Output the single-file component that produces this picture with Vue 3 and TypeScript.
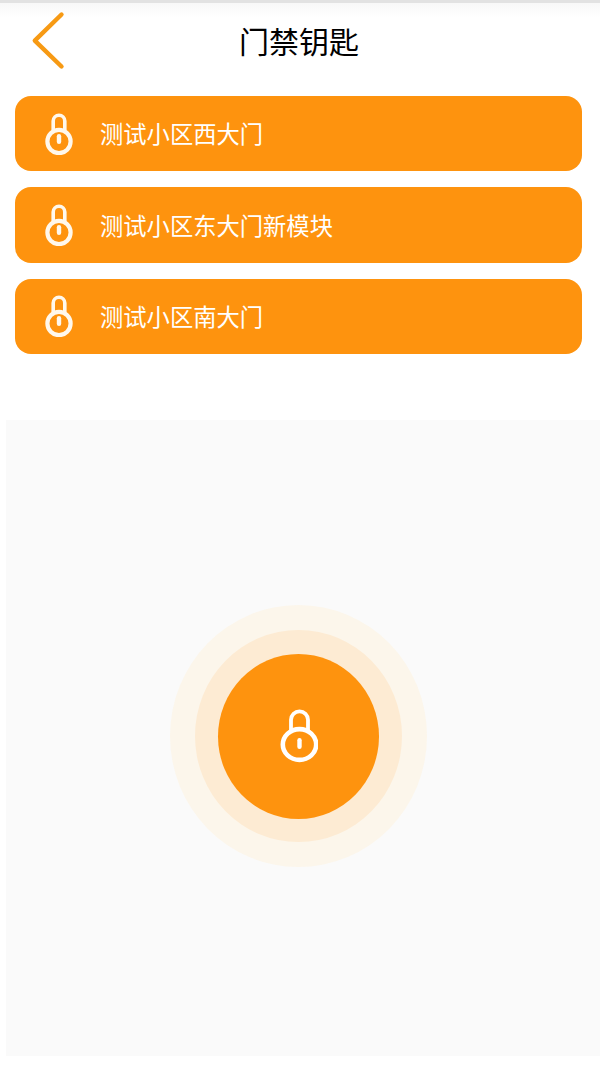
<script setup lang="ts">
const doors: string[] = ['测试小区西大门', '测试小区东大门新模块', '测试小区南大门']
</script>

<template>
  <div class="page">
    <div class="top-line"></div>
    <header class="header">
      <svg class="back" width="34" height="64" viewBox="0 0 34 64" fill="none">
        <path d="M30.5 6.5 L3.8 32.6 L30.5 58.5" stroke="#f79a14" stroke-width="4.4" stroke-linecap="round" stroke-linejoin="round" />
      </svg>
      <h1 class="title">门禁钥匙</h1>
    </header>
    <section class="list">
      <div v-for="door in doors" :key="door" class="item">
        <svg class="lock" width="30" height="42" viewBox="0 0 30 42" fill="none">
          <path d="M9.2 17 V8 a5.8 5.8 0 0 1 11.6 0 V17" stroke="#fff8ec" stroke-width="3.6" />
          <circle cx="15" cy="28.5" r="11.6" stroke="#fff8ec" stroke-width="4.2" />
          <rect x="12.8" y="21" width="4.4" height="10" rx="2.2" fill="#fff8ec" />
        </svg>
        <span class="label">{{ door }}</span>
      </div>
    </section>
    <main class="panel">
      <div class="ring-outer">
        <div class="ring-mid">
          <div class="core">
            <svg class="core-lock" width="38" height="54" viewBox="0 0 38 54" fill="none">
              <path d="M11 21 V10.8 a8.5 8.5 0 0 1 17 0 V21" stroke="#fff" stroke-width="3.8" />
              <ellipse cx="19.5" cy="35.5" rx="16.7" ry="15.4" stroke="#fff" stroke-width="4.6" />
              <rect x="17.3" y="29" width="4.4" height="11" rx="2.2" fill="#fff" />
            </svg>
          </div>
        </div>
      </div>
    </main>
    <div class="foot"></div>
  </div>
</template>

<style>
html, body { margin: 0; background: #fff; }
</style>

<style scoped>
.page {
  width: 600px;
  height: 1067px;
  overflow: hidden;
  display: flex;
  flex-direction: column;
  background: #fff;
  font-family: "Noto Sans CJK SC", "Noto Sans", sans-serif;
}
.top-line { height: 3px; background: #e2e2e2; flex: none; }
.header {
  position: relative;
  height: 80px;
  flex: none;
  display: flex;
  align-items: center;
  justify-content: center;
  background: linear-gradient(#f8f8f8, #fff 14px);
}
.back { position: absolute; left: 31px; top: 5px; }
.title {
  margin: 0 2px 6px 0;
  font-size: 30px;
  font-weight: 400;
  line-height: 40px;
  color: #000;
}
.list {
  display: flex;
  flex-direction: column;
  gap: 16px;
  padding: 13px 18px 0 15px;
  flex: none;
}
.item {
  height: 75.4px;
  border-radius: 16px;
  background: #fe930e;
  display: flex;
  align-items: center;
  padding-left: 29px;
}
.lock { flex: none; margin-right: 26px; }
.label {
  font-size: 23.3px;
  color: #fff;
  line-height: 32px;
  margin-bottom: 1px;
}
.panel {
  margin: 66px 0 0 6px;
  height: 636px;
  flex: none;
  background: #fafafa;
  display: flex;
  justify-content: center;
  padding-top: 185px;
  box-sizing: border-box;
}
.ring-outer {
  width: 257px;
  height: 262px;
  margin-left: -9px;
  border-radius: 50%;
  background: #fcf6eb;
  display: flex;
  align-items: center;
  justify-content: center;
}
.ring-mid {
  width: 207px;
  height: 212px;
  border-radius: 50%;
  background: #fdebd3;
  display: flex;
  align-items: center;
  justify-content: center;
}
.core {
  width: 161px;
  height: 165px;
  border-radius: 50%;
  background: #fe930e;
  display: flex;
  align-items: center;
  justify-content: center;
}
.core-lock { margin-bottom: 1px; }
.foot { flex: 1; background: #fff; }
</style>
